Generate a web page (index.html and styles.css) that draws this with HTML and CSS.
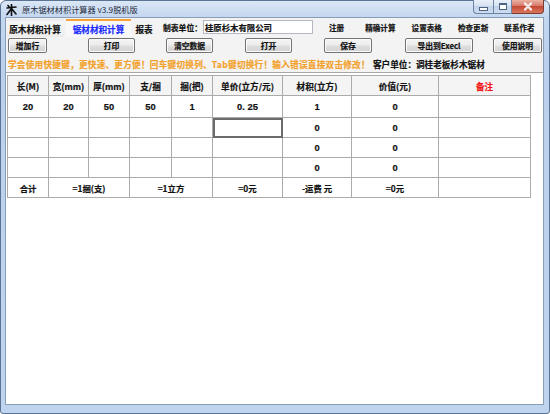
FILE: index.html
```html
<!DOCTYPE html>
<html lang="zh-CN">
<head>
<meta charset="utf-8">
<title>原木锯材材积计算器 v3.9脱机版</title>
<link rel="stylesheet" href="styles.css">
</head>
<body>
<div class="window">
  <div class="titlebar">
    <svg class="appicon" width="11" height="12" viewBox="0 0 11 12">
      <path d="M5.5 0.5 L5.5 11.5 M1 4 L10 3 M5.5 4.5 L1 10.5 M5.5 4.5 L10 10 M2 1.5 L3.5 3.5" stroke="#111" stroke-width="1.6" fill="none" stroke-linecap="round"/>
    </svg>
    <span class="title">原木锯材材积计算器 v3.9脱机版</span>
    <div class="caption">
      <span class="cbtn cmin"><span class="minglyph"></span></span>
      <span class="cbtn cmax"><span class="maxglyph"></span></span>
      <span class="cbtn cclose">
        <svg width="10" height="9" viewBox="0 0 10 9"><path d="M2 1.5 L8 7.5 M8 1.5 L2 7.5" stroke="#fff" stroke-width="2.2" stroke-linecap="round"/><path d="M2 1.5 L8 7.5 M8 1.5 L2 7.5" stroke="#6b2a20" stroke-width="0.4" fill="none" opacity="0.4"/></svg>
      </span>
    </div>
  </div>
  <div class="client">
    <div class="toprow">
      <div class="tabs">
        <span class="tab tab1">原木材积计算</span>
        <span class="tab tab2 active">锯材材积计算</span>
        <span class="tab tab3">报表</span>
      </div>
      <span class="label">制表单位：</span>
      <span class="textbox">桂原杉木有限公司</span>
      <nav class="menu">
        <span class="mi mi-first">注册</span>
        <span class="mi">精确计算</span>
        <span class="mi">设置表格</span>
        <span class="mi">检查更新</span>
        <span class="mi">联系作者</span>
      </nav>
    </div>
    <div class="btnrow">
      <button class="btn b1">增加行</button>
      <button class="btn b2">打印</button>
      <button class="btn b3">清空数据</button>
      <button class="btn b4">打开</button>
      <button class="btn b5">保存</button>
      <button class="btn b6">导出到Execl</button>
      <button class="btn b7">使用说明</button>
    </div>
    <div class="hintrow">
      <span class="hint">学会使用快捷键，更快速、更方便！回车键切换列、Tab键切换行！输入错误直接双击修改！</span>
      <span class="customer">客户单位：调桂老板杉木锯材</span>
    </div>
    <div class="panel">
      <table class="grid">
        <colgroup>
          <col class="c41"><col class="c40"><col class="c41"><col class="c42"><col class="c41"><col class="c70"><col class="c69"><col class="c87"><col class="c92">
        </colgroup>
        <thead>
          <tr class="hrow">
            <th>长(M)</th><th>宽(mm)</th><th>厚(mm)</th><th>支/捆</th><th>捆(把)</th><th>单价(立方/元)</th><th>材积(立方)</th><th>价值(元)</th><th class="red">备注</th>
          </tr>
        </thead>
        <tbody>
          <tr class="row1">
            <td>20</td><td>20</td><td>50</td><td>50</td><td>1</td><td>0. 25</td><td>1</td><td>0</td><td></td>
          </tr>
          <tr class="row">
            <td></td><td></td><td></td><td></td><td></td><td class="current"></td><td>0</td><td>0</td><td></td>
          </tr>
          <tr class="row">
            <td></td><td></td><td></td><td></td><td></td><td></td><td>0</td><td>0</td><td></td>
          </tr>
          <tr class="row">
            <td></td><td></td><td></td><td></td><td></td><td></td><td>0</td><td>0</td><td></td>
          </tr>
          <tr class="row total">
            <td>合计</td><td colspan="2">=1捆(支)</td><td colspan="2">=1立方</td><td>=0元</td><td>-运费 元</td><td>=0元</td><td></td>
          </tr>
        </tbody>
      </table>
    </div>
  </div>
</div>
</body>
</html>
```

FILE: styles.css
```css
html, body {
  margin: 0;
  padding: 0;
  background: #ffffff;
}

.window {
  width: 550px;
  height: 414px;
  box-sizing: border-box;
  border: 1px solid #5b7493;
  border-radius: 6px 6px 3px 3px;
  background: linear-gradient(180deg, #dae7f6 0px, #c3d7f0 16px, #bad0ec 60px, #bfd4ee 100%);
  padding: 0 5px 8px 4px;
  display: flex;
  flex-direction: column;
  font-family: "Noto Sans CJK SC", "Liberation Sans", sans-serif;
}

/* title bar */
.titlebar {
  height: 16px;
  display: flex;
  align-items: flex-start;
  flex: 0 0 16px;
}

.appicon {
  margin: 3px 0 0 1px;
  flex: 0 0 auto;
}

.title {
  margin: 1px 0 0 5px;
  font-size: 8.2px;
  line-height: 14px;
  color: #1e2a3a;
  white-space: nowrap;
}

.caption {
  margin-left: auto;
  margin-right: 0;
  display: flex;
  margin-top: -1px;
}

.cbtn {
  height: 14px;
  box-sizing: border-box;
  border: 1px solid #6c83a4;
  border-top: none;
  display: flex;
  align-items: center;
  justify-content: center;
}

.cmin {
  width: 20px;
  border-radius: 0 0 0 4px;
  border-right: none;
  background: linear-gradient(180deg, #e9f0f9 0%, #d6e2f1 45%, #c2d3ea 50%, #cddcef 100%);
}

.cmax {
  width: 19px;
  background: linear-gradient(180deg, #e9f0f9 0%, #d6e2f1 45%, #c2d3ea 50%, #cddcef 100%);
}

.cclose {
  width: 32px;
  border-left: none;
  border-color: #7d3a30;
  border-radius: 0 0 4px 0;
  background: linear-gradient(180deg, #eab2a3 0%, #d8796a 45%, #c54a36 50%, #d9765c 100%);
}

.minglyph {
  width: 7px;
  height: 2px;
  margin-top: 5px;
  background: #ffffff;
  border: 1px solid #4f6482;
}

.maxglyph {
  width: 6px;
  height: 4px;
  border: 1px solid #4f6482;
  border-top-width: 2px;
  background: #ffffff;
  box-shadow: inset 0 0 0 1px #ffffff;
}

/* client */
.client {
  flex: 1 1 auto;
  border: 1px solid #8a9db6;
  background: #f3f3f3;
  display: flex;
  flex-direction: column;
  min-height: 0;
  -webkit-text-stroke: 0.2px currentColor;
}

.toprow {
  height: 19px;
  flex: 0 0 19px;
  display: flex;
  align-items: stretch;
  white-space: nowrap;
}

.tabs {
  display: flex;
  align-items: stretch;
}

.tab {
  margin-top: 1px;
  box-sizing: border-box;
  display: flex;
  align-items: center;
  justify-content: center;
  font-size: 8.6px;
  font-weight: 700;
  color: #111;
  border-top: 2px solid transparent;
}

.tab1 {
  width: 58px;
  background: linear-gradient(180deg, #f6f6f6, #ececec);
}

.tab2 {
  margin-left: 2px;
  width: 65px;
}

.tab3 {
  margin-left: 2px;
  width: 22px;
}

.tab.active {
  color: #1a2bff;
  border-top-color: #f6a23a;
  background: #f8f8f8;
}

.label {
  margin-left: 8px;
  display: flex;
  align-items: center;
  font-size: 7.8px;
  font-weight: 700;
  color: #111;
}

.textbox {
  margin: 2px 0 3px 1px;
  width: 110px;
  box-sizing: border-box;
  border: 1px solid #b4b8c0;
  background: #ffffff;
  display: flex;
  align-items: center;
  padding-left: 1px;
  font-size: 8.4px;
  font-weight: 700;
  color: #111;
}

.menu {
  display: flex;
  align-items: center;
  margin-left: 16px;
  gap: 16px;
}

.mi {
  font-size: 7.6px;
  font-weight: 700;
  color: #111;
}

.mi-first {
  margin-right: 5px;
}

/* buttons */
.btnrow {
  margin-top: 1px;
  height: 15px;
  flex: 0 0 15px;
  display: flex;
}

.btn {
  height: 15px;
  box-sizing: border-box;
  padding: 0;
  border: 1px solid #737373;
  border-radius: 2px;
  background: linear-gradient(180deg, #f4f4f4 0%, #ececec 48%, #dedede 52%, #d3d3d3 100%);
  box-shadow: inset 0 0 0 1px #fbfbfb;
  font-family: "Noto Sans CJK SC", "Liberation Sans", sans-serif;
  font-size: 7.8px;
  font-weight: 700;
  color: #111;
  line-height: 13px;
  white-space: nowrap;
  -webkit-text-stroke: 0.2px currentColor;
}

.b1 { margin-left: 2px; width: 39px; }
.b2 { margin-left: 41px; width: 47px; }
.b3 { margin-left: 31px; width: 47px; }
.b4 { margin-left: 32px; width: 47px; }
.b5 { margin-left: 32px; width: 48px; }
.b6 { margin-left: 33px; width: 68px; }
.b7 { margin-left: 20px; width: 49px; }

/* hint row */
.hintrow {
  margin-top: 2px;
  height: 17px;
  flex: 0 0 17px;
  display: flex;
  align-items: center;
  white-space: nowrap;
}

.hint {
  flex: 0 0 363px;
  margin-left: 2px;
  overflow: hidden;
  font-size: 8.6px;
  font-weight: 700;
  color: #f2a22c;
  letter-spacing: 0.27px;
}

.customer {
  margin-left: 2px;
  font-size: 8.6px;
  font-weight: 700;
  color: #111;
}

/* grid panel */
.panel {
  flex: 1 1 auto;
  background: #ffffff;
  border-top: 1px solid #a7a7a7;
  padding-top: 2px;
  padding-left: 1px;
}

.grid {
  border-collapse: collapse;
  table-layout: fixed;
  width: 523px;
  font-family: "Liberation Sans", "Noto Sans CJK SC", sans-serif;
  font-size: 9.4px;
  font-weight: 700;
  color: #111;
}

.c40 { width: 40px; }
.c41 { width: 41px; }
.c42 { width: 42px; }
.c69 { width: 69px; }
.c70 { width: 70px; }
.c87 { width: 87px; }
.c92 { width: 92px; }

.grid th,
.grid td {
  border: 1px solid #ababab;
  padding: 0;
  text-align: center;
  vertical-align: middle;
  white-space: nowrap;
  overflow: hidden;
}

.grid th {
  background: #f4f4f4;
  font-family: "Noto Sans CJK SC", "Liberation Sans", sans-serif;
  font-size: 8.6px;
  font-weight: 700;
}

.hrow { height: 20px; }
.row1 { height: 22px; }
.row { height: 20px; }

.total td {
  font-family: "Noto Sans CJK SC", "Liberation Sans", sans-serif;
  font-size: 8.4px;
}

.red {
  color: #f21414;
}

.grid td.current {
  outline: 2px solid #6b6b6b;
  outline-offset: -2px;
}
```
